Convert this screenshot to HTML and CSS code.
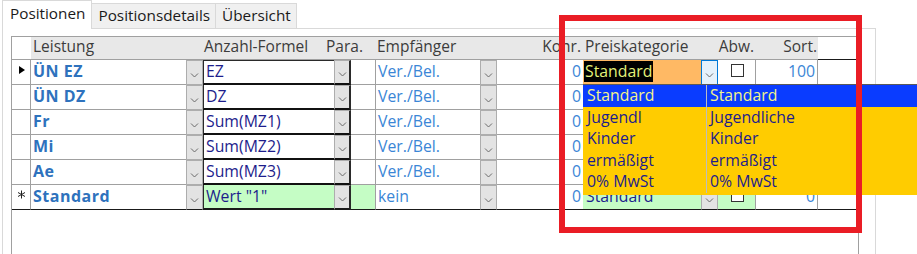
FILE: index.html
```html
<!DOCTYPE html>
<html lang="de">
<head>
<meta charset="utf-8">
<title>Positionen</title>
<link rel="stylesheet" href="styles.css">
</head>
<body>
<div class="tabs">
  <div class="tab active">Positionen</div>
  <div class="tab">Positionsdetails</div>
  <div class="tab">Übersicht</div>
</div>
<div class="panel">
  <div class="sheet">
    <div class="hdr">
      <div class="h-sel"></div>
      <div class="h h-leis">Leistung</div>
      <div class="h h-form">Anzahl-Formel</div>
      <div class="h h-para">Para.</div>
      <div class="h h-empf">Empfänger</div>
      <div class="h h-kohr">Kohr.</div>
      <div class="h h-preis">Preiskategorie</div>
      <div class="h h-abw">Abw.</div>
      <div class="h h-sort">Sort.</div>
      <div class="h-rest"></div>
    </div>

    <div class="row first">
      <div class="sel"><span class="tri"></span></div>
      <div class="leis">ÜN EZ</div>
      <div class="btn"><svg width="9" height="5" viewBox="0 0 9 5"><polyline points="1,0.5 4.5,4 8,0.5"/></svg></div>
      <div class="form">EZ</div>
      <div class="btn btn-form"><svg width="9" height="5" viewBox="0 0 9 5"><polyline points="1,0.5 4.5,4 8,0.5"/></svg></div>
      <div class="para"></div>
      <div class="empf">Ver./Bel.</div>
      <div class="btn"><svg width="9" height="5" viewBox="0 0 9 5"><polyline points="1,0.5 4.5,4 8,0.5"/></svg></div>
      <div class="kohr">0</div>
      <div class="preis edit"><span class="selected">Standard</span></div>
      <div class="btn focus"><svg width="9" height="5" viewBox="0 0 9 5"><polyline points="1,0.5 4.5,4 8,0.5"/></svg></div>
      <div class="abw"><span class="chk"></span></div>
      <div class="sort">100</div>
      <div class="rest"></div>
    </div>

    <div class="row">
      <div class="sel"></div>
      <div class="leis">ÜN DZ</div>
      <div class="btn"><svg width="9" height="5" viewBox="0 0 9 5"><polyline points="1,0.5 4.5,4 8,0.5"/></svg></div>
      <div class="form">DZ</div>
      <div class="btn btn-form"><svg width="9" height="5" viewBox="0 0 9 5"><polyline points="1,0.5 4.5,4 8,0.5"/></svg></div>
      <div class="para"></div>
      <div class="empf">Ver./Bel.</div>
      <div class="btn"><svg width="9" height="5" viewBox="0 0 9 5"><polyline points="1,0.5 4.5,4 8,0.5"/></svg></div>
      <div class="kohr">0</div>
      <div class="preis"></div>
      <div class="btn"></div>
      <div class="abw"></div>
      <div class="sort"></div>
      <div class="rest"></div>
    </div>

    <div class="row">
      <div class="sel"></div>
      <div class="leis">Fr</div>
      <div class="btn"><svg width="9" height="5" viewBox="0 0 9 5"><polyline points="1,0.5 4.5,4 8,0.5"/></svg></div>
      <div class="form">Sum(MZ1)</div>
      <div class="btn btn-form"><svg width="9" height="5" viewBox="0 0 9 5"><polyline points="1,0.5 4.5,4 8,0.5"/></svg></div>
      <div class="para"></div>
      <div class="empf">Ver./Bel.</div>
      <div class="btn"><svg width="9" height="5" viewBox="0 0 9 5"><polyline points="1,0.5 4.5,4 8,0.5"/></svg></div>
      <div class="kohr">0</div>
      <div class="preis"></div>
      <div class="btn"></div>
      <div class="abw"></div>
      <div class="sort"></div>
      <div class="rest"></div>
    </div>

    <div class="row">
      <div class="sel"></div>
      <div class="leis">Mi</div>
      <div class="btn"><svg width="9" height="5" viewBox="0 0 9 5"><polyline points="1,0.5 4.5,4 8,0.5"/></svg></div>
      <div class="form">Sum(MZ2)</div>
      <div class="btn btn-form"><svg width="9" height="5" viewBox="0 0 9 5"><polyline points="1,0.5 4.5,4 8,0.5"/></svg></div>
      <div class="para"></div>
      <div class="empf">Ver./Bel.</div>
      <div class="btn"><svg width="9" height="5" viewBox="0 0 9 5"><polyline points="1,0.5 4.5,4 8,0.5"/></svg></div>
      <div class="kohr">0</div>
      <div class="preis"></div>
      <div class="btn"></div>
      <div class="abw"></div>
      <div class="sort"></div>
      <div class="rest"></div>
    </div>

    <div class="row">
      <div class="sel"></div>
      <div class="leis">Ae</div>
      <div class="btn"><svg width="9" height="5" viewBox="0 0 9 5"><polyline points="1,0.5 4.5,4 8,0.5"/></svg></div>
      <div class="form">Sum(MZ3)</div>
      <div class="btn btn-form"><svg width="9" height="5" viewBox="0 0 9 5"><polyline points="1,0.5 4.5,4 8,0.5"/></svg></div>
      <div class="para"></div>
      <div class="empf">Ver./Bel.</div>
      <div class="btn"><svg width="9" height="5" viewBox="0 0 9 5"><polyline points="1,0.5 4.5,4 8,0.5"/></svg></div>
      <div class="kohr">0</div>
      <div class="preis"></div>
      <div class="btn"></div>
      <div class="abw"></div>
      <div class="sort"></div>
      <div class="rest"></div>
    </div>

    <div class="row last">
      <div class="sel"><svg class="star" width="9" height="9" viewBox="0 0 9 9"><path d="M4.5 0.5V8.5M1 2.5L8 6.5M1 6.5L8 2.5"/></svg></div>
      <div class="leis">Standard</div>
      <div class="btn"><svg width="9" height="5" viewBox="0 0 9 5"><polyline points="1,0.5 4.5,4 8,0.5"/></svg></div>
      <div class="form new">Wert "1"</div>
      <div class="btn btn-form"><svg width="9" height="5" viewBox="0 0 9 5"><polyline points="1,0.5 4.5,4 8,0.5"/></svg></div>
      <div class="para new"></div>
      <div class="empf">kein</div>
      <div class="btn"><svg width="9" height="5" viewBox="0 0 9 5"><polyline points="1,0.5 4.5,4 8,0.5"/></svg></div>
      <div class="kohr">0</div>
      <div class="preis new navy"><span class="under">Standard</span></div>
      <div class="btn"><svg width="9" height="5" viewBox="0 0 9 5"><polyline points="1,0.5 4.5,4 8,0.5"/></svg></div>
      <div class="abw new"><span class="chk"></span></div>
      <div class="sort">0</div>
      <div class="rest"></div>
    </div>
  </div>
</div>

<div class="popup">
  <div class="item active"><span class="c1">Standard</span><span class="c2">Standard</span></div>
  <div class="item"><span class="c1">Jugendl</span><span class="c2">Jugendliche</span></div>
  <div class="item"><span class="c1">Kinder</span><span class="c2">Kinder</span></div>
  <div class="item"><span class="c1">ermäßigt</span><span class="c2">ermäßigt</span></div>
  <div class="item"><span class="c1">0% MwSt</span><span class="c2">0% MwSt</span></div>
</div>

<div class="redbox"></div>
</body>
</html>
```

FILE: styles.css
```css
* { box-sizing: border-box; }

body {
  margin: 0;
  width: 917px;
  height: 254px;
  overflow: hidden;
  position: relative;
  background: #ffffff;
  font-family: "Open Sans", "Noto Sans", sans-serif;
  font-size: 15.5px;
  color: #333333;
}

/* ---------- tabs ---------- */
.tabs {
  display: flex;
  align-items: flex-end;
  height: 28px;
  padding-left: 2px;
}

.tab {
  height: 25px;
  padding: 0 5px 0 6px;
  line-height: 22px;
  background: #f0f0f0;
  border: 1px solid #d9d9d9;
  border-bottom: none;
  border-left: none;
  color: #1a1a1a;
  font-size: 15.3px;
}

.tab.active {
  position: relative;
  z-index: 1;
  height: 29px;
  margin-bottom: -1px;
  padding: 0 6px 0 7px;
  line-height: 25px;
  background: #ffffff;
  border-left: 1px solid #d9d9d9;
}

/* ---------- panel ---------- */
.panel {
  margin-left: 2px;
  width: 874px;
  height: 226px;
  border: 1px solid #d9d9d9;
  border-bottom: none;
  padding: 7px 0 0 8px;
}

.sheet {
  width: 848px;
  height: 230px;
  border-left: 1px solid #a0a0a0;
  border-top: 1px solid #a0a0a0;
  border-right: 1px solid #a0a0a0;
}

/* ---------- header ---------- */
.hdr {
  display: grid;
  grid-template-columns: 19px 172px 120px 52px 122px 86px 135px 37px 63px 40px;
  height: 23px;
}

.hdr > div {
  border-bottom: 1px solid #a0a0a0;
}

.h {
  background: #e8e8e8;
  line-height: 18px;
  color: #3c3c3c;
  white-space: nowrap;
}

.h-leis { padding-left: 2px; }
.h-form { padding-left: 1px; }
.h-para { padding-left: 3px; }
.h-empf { padding-left: 2px; }
.h-kohr { text-align: right; padding-right: 2px; }
.h-preis { padding-left: 2px; }
.h-abw { text-align: center; }
.h-sort { text-align: right; padding-right: 1px; }
.hdr > .h-rest { border-bottom-color: #1a1a1a; }

/* ---------- rows ---------- */
.row {
  display: grid;
  grid-template-columns: 19px 155px 17px 131px 17px 24px 105px 17px 86px 118px 17px 37px 63px 40px;
  height: 25px;
  line-height: 22px;
  font-size: 15.8px;
}

.row > div {
  border-bottom: 1px solid #a0a0a0;
  white-space: nowrap;
  overflow: hidden;
}

.row.last > div { border-bottom-color: #1a1a1a; }

.sel {
  border-right: 1px solid #a0a0a0;
  display: flex;
  align-items: center;
  justify-content: flex-end;
  padding-right: 5px;
}

.tri {
  width: 0;
  height: 0;
  border-top: 4.5px solid transparent;
  border-bottom: 4.5px solid transparent;
  border-left: 6px solid #000000;
  margin-bottom: 4px;
}

.star {
  margin-bottom: 5px;
  margin-right: -1px;
}
.star path {
  fill: none;
  stroke: #222222;
  stroke-width: 1;
}

.leis {
  padding-left: 2px;
  font-weight: 700;
  font-size: 16px;
  letter-spacing: 0.5px;
  color: #2e72bd;
}

.btn {
  background: #e3e3e3;
  border: 1px solid #adadad;
  display: flex;
  justify-content: center;
  align-items: center;
  padding-top: 5px;
}
.row > .btn { border-bottom-color: #adadad; }

.btn polyline {
  fill: none;
  stroke: #6a6a6a;
  stroke-width: 1;
}

.btn.focus {
  background: #e5f1fb;
  border-color: #0078d7;
}
.row > .btn.focus { border-bottom-color: #0078d7; }

.form {
  padding-left: 2px;
  color: #1d1d8c;
  border-left: 1px solid #2a2a2a;
}
.row > .form { border-bottom: 2px solid #111111; }
.row > .btn-form {
  border-right: 2px solid #2a2a2a;
  border-bottom: 2px solid #111111;
}
.first > .form { box-shadow: inset 0 1px 0 #2a2a2a; }

.empf {
  padding-left: 2px;
  color: #3a86d6;
  border-left: 1px solid #a0a0a0;
}

.kohr {
  text-align: right;
  padding-right: 2px;
  color: #3a86d6;
}

.preis {
  padding-left: 1px;
}
.preis.edit {
  background: #ffb964;
  padding-top: 1px;
  line-height: 21px;
}
.selected {
  display: inline-block;
  background: #000000;
  color: #e4f27a;
  padding: 0 1px 0 1px;
}
.navy { color: #1d1d8c; padding-left: 3px; }
.under { display: inline-block; }

.abw {
  display: flex;
  justify-content: center;
  padding-top: 4px;
}
.chk {
  width: 13px;
  height: 13px;
  border: 1px solid #333333;
  background: #ffffff;
  margin-left: 1px;
}

.sort {
  text-align: right;
  padding-right: 2px;
  color: #3a86d6;
  border: 1px solid #a0a0a0;
  border-top: none;
}

.new { background: #c5fdc5; }

/* ---------- combo popup (overlay) ---------- */
.popup {
  position: absolute;
  left: 583px;
  top: 84px;
  width: 334px;
  height: 111px;
  background: #ffcc00;
  border-top: 1px solid #5a5a5a;
  font-size: 15.8px;
  z-index: 5;
}

.item {
  display: grid;
  grid-template-columns: 124px 1fr;
  height: 21.6px;
  line-height: 21.6px;
  color: #1d1d8c;
}

.item.active {
  background: #0a3cff;
  color: #f4f48a;
}

.c1 {
  padding-left: 4px;
  border-right: 1px solid #bdbdbd;
}
.c2 { padding-left: 3px; }

/* ---------- red annotation rectangle (overlay) ---------- */
.redbox {
  position: absolute;
  left: 559px;
  top: 15px;
  width: 303px;
  height: 218px;
  border: 6px solid #ea1d25;
  z-index: 10;
}
```
